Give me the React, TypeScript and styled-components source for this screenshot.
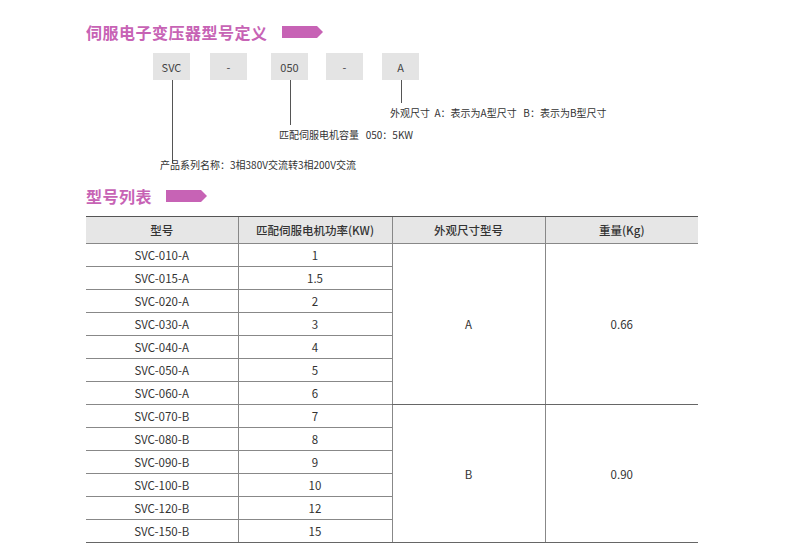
import React from "react";
import styled, { createGlobalStyle } from "styled-components";

const GlobalStyle = createGlobalStyle`
  body { margin: 0; background: #fff; font-family: "Noto Sans CJK SC", "Noto Sans", sans-serif; color: #333; }
`;

const Page = styled.div`
  width: 800px;
  height: 553px;
  padding: 21px 0 0 86px;
  box-sizing: border-box;
  display: flex;
  flex-direction: column;
`;

const Heading = styled.div`
  display: flex;
  align-items: center;
  gap: 14px;
  height: 22px;
  font-size: 16px;
  font-weight: 700;
  color: #c763b5;
  letter-spacing: 0.5px;
`;

const Arrow = () => (
  <svg width="41" height="12" viewBox="0 0 41 12">
    <polygon points="0,0 35,0 41,6 35,12 0,12" fill="#c763b5" />
  </svg>
);

/* diagram canvas: boxes, leader lines and notes sit at their drawn places */
const Diagram = styled.div`
  position: relative;
  height: 142px;
  margin-left: 67px;
`;

const CodeBox = styled.div<{ x: number }>`
  position: absolute;
  top: 10px;
  left: ${(p) => p.x}px;
  width: 37px;
  height: 27px;
  background: #e4e4e4;
  display: flex;
  align-items: center;
  justify-content: center;
  font-size: 11px;
  color: #444;
`;

const Stem = styled.div<{ x: number; h: number }>`
  position: absolute;
  top: 37px;
  left: ${(p) => p.x}px;
  width: 1px;
  height: ${(p) => p.h}px;
  background: #555;
`;

const Note = styled.div<{ x: number; y: number }>`
  position: absolute;
  left: ${(p) => p.x}px;
  top: ${(p) => p.y}px;
  font-size: 10px;
  line-height: 14px;
  color: #333;
  white-space: nowrap;
`;

const Table = styled.table`
  margin-top: 9px;
  width: 612px;
  border-collapse: collapse;
  font-size: 11.5px;
  color: #333;
  th, td { text-align: center; padding: 0; }
  th { background: #e6e6e6; height: 26px; font-weight: 500; border-top: 1.5px solid #555; border-bottom: 1px solid #888; }
  td { height: 22px; border-bottom: 1px solid #888; }
  th + th, td + td { border-left: 1px solid #888; }
  tr:last-child td, td[rowspan] { border-bottom: 1.5px solid #666; }
`;

const rowsA = [["SVC-010-A", "1"], ["SVC-015-A", "1.5"], ["SVC-020-A", "2"], ["SVC-030-A", "3"], ["SVC-040-A", "4"], ["SVC-050-A", "5"], ["SVC-060-A", "6"]];
const rowsB = [["SVC-070-B", "7"], ["SVC-080-B", "8"], ["SVC-090-B", "9"], ["SVC-100-B", "10"], ["SVC-120-B", "12"], ["SVC-150-B", "15"]];

export default function App() {
  return (
    <Page>
      <GlobalStyle />
      <Heading>伺服电子变压器型号定义<Arrow /></Heading>
      <Diagram>
        <CodeBox x={0}>SVC</CodeBox>
        <CodeBox x={57}>-</CodeBox>
        <CodeBox x={118}>050</CodeBox>
        <CodeBox x={173}>-</CodeBox>
        <CodeBox x={229}>A</CodeBox>
        <Stem x={19} h={83} />
        <Stem x={137} h={45} />
        <Stem x={248} h={23} />
        <Note x={237} y={63}>外观尺寸&nbsp;&nbsp;A：表示为A型尺寸&nbsp;&nbsp;&nbsp;B：表示为B型尺寸</Note>
        <Note x={126} y={85}>匹配伺服电机容量&nbsp;&nbsp;&nbsp;050：5KW</Note>
        <Note x={7} y={115}>产品系列名称：3相380V交流转3相200V交流</Note>
      </Diagram>
      <Heading>型号列表<Arrow /></Heading>
      <Table>
        <colgroup>
          <col style={{ width: 152 }} />
          <col style={{ width: 154 }} />
          <col style={{ width: 153 }} />
          <col style={{ width: 153 }} />
        </colgroup>
        <thead>
          <tr><th>型号</th><th>匹配伺服电机功率(KW)</th><th>外观尺寸型号</th><th>重量(Kg)</th></tr>
        </thead>
        <tbody>
          {rowsA.map((r, i) => (
            <tr key={r[0]}>
              <td>{r[0]}</td><td>{r[1]}</td>
              {i === 0 && <><td rowSpan={7}>A</td><td rowSpan={7}>0.66</td></>}
            </tr>
          ))}
          {rowsB.map((r, i) => (
            <tr key={r[0]}>
              <td>{r[0]}</td><td>{r[1]}</td>
              {i === 0 && <><td rowSpan={6}>B</td><td rowSpan={6}>0.90</td></>}
            </tr>
          ))}
        </tbody>
      </Table>
    </Page>
  );
}
